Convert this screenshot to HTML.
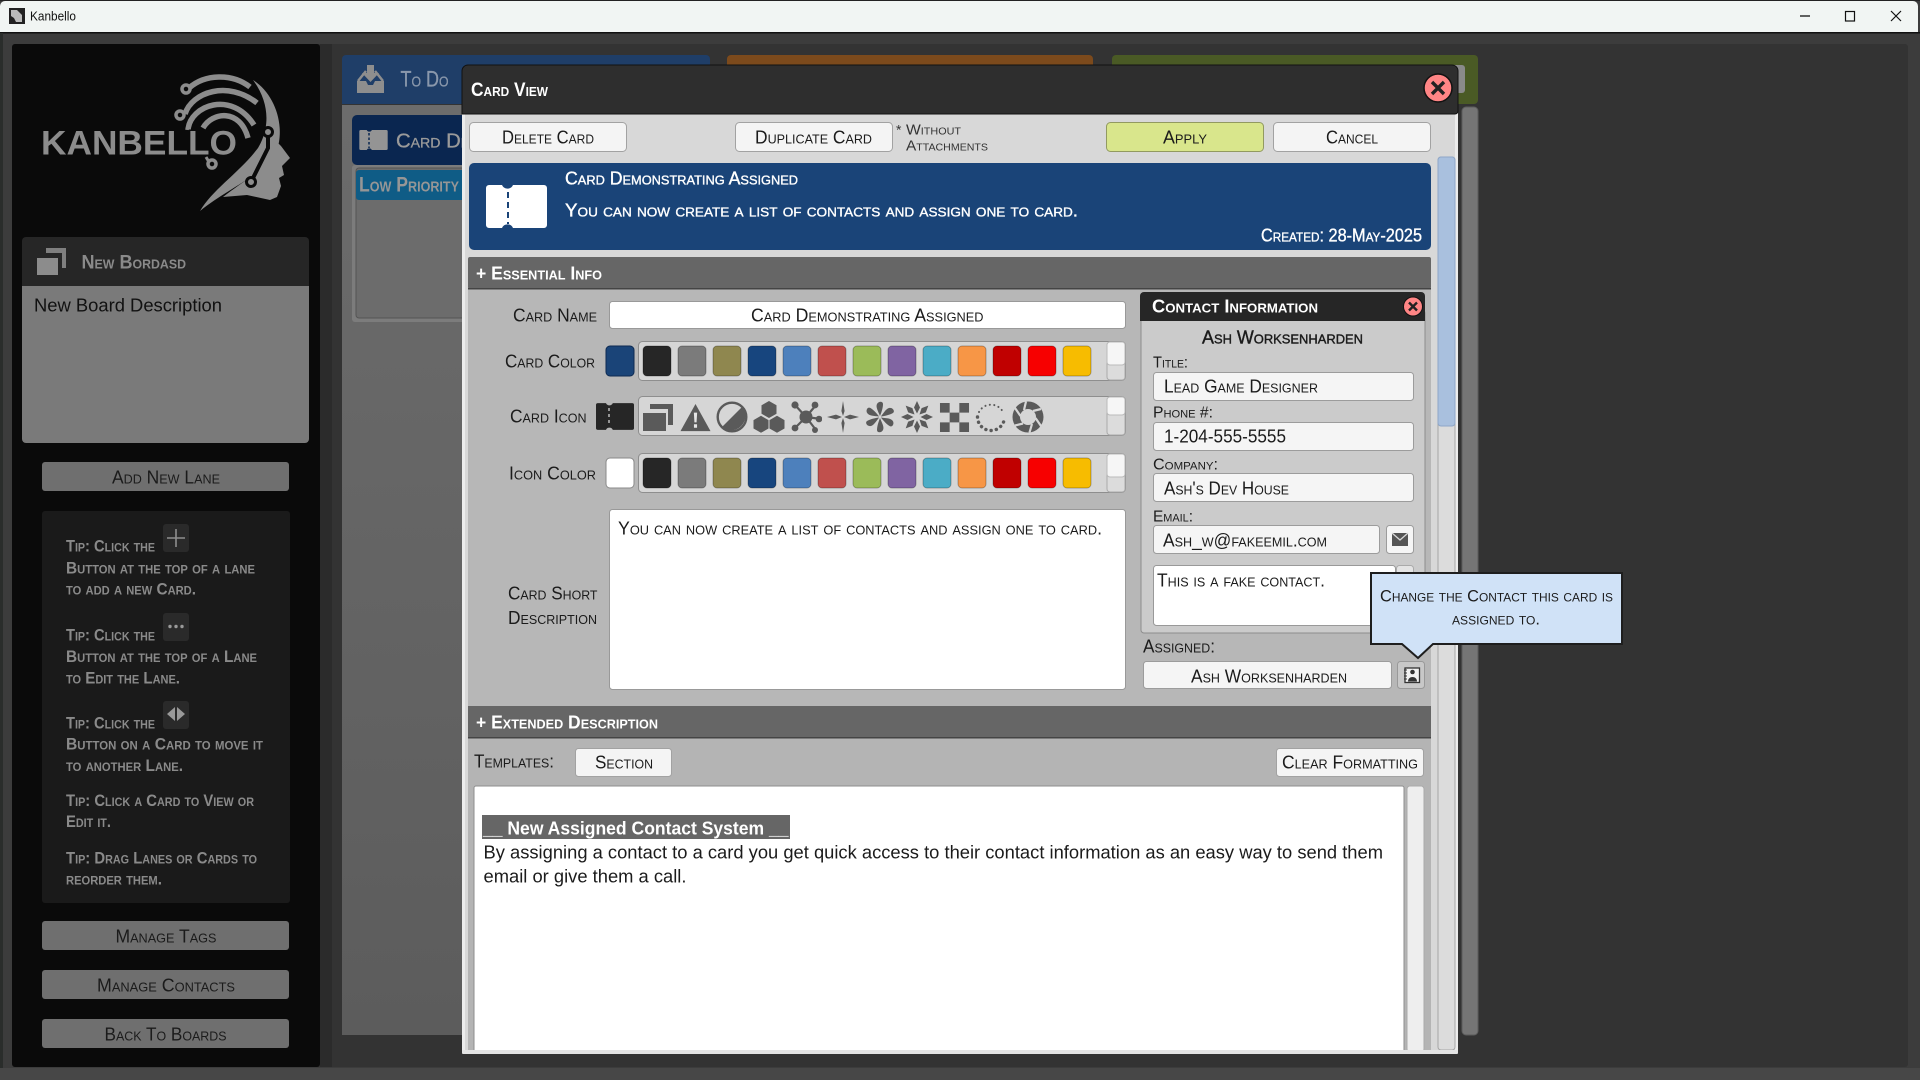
<!DOCTYPE html>
<html lang="en"><head><meta charset="utf-8"><title>Kanbello</title>
<style>
html,body{margin:0;padding:0;background:#3c3c3c;overflow:hidden;width:1920px;height:1080px}
svg{display:block;position:absolute;left:0;top:0}
text{font-family:"Liberation Sans",sans-serif;font-variant:small-caps;font-size:18px;fill:#1b1b1b;transform:translateY(-.6px)}
.w{fill:#fff;font-weight:700}
.g{fill:#8a8a8a;font-weight:700}
.n{font-variant:normal}
.btn{fill:#f4f4f4;stroke:#a2a2a2;stroke-width:1}
.fld{fill:#f5f5f5;stroke:#9c9c9c;stroke-width:1}
.wh{fill:#fff;stroke:#999;stroke-width:1}
.sb{fill:#6f6f6f}
.strip{fill:#d6d6d6;stroke:#8e8e8e;stroke-width:1}
.sw{stroke:#000;stroke-opacity:.28;stroke-width:1}
.tip{font-size:16.5px}
.ic{fill:#5a5a5a}
</style></head><body>
<svg width="1920" height="1080" viewBox="0 0 1920 1080">
<defs>
<linearGradient id="lane" x1="0" y1="0" x2="0" y2="1"><stop offset="0" stop-color="#6c6c6c"/><stop offset="1" stop-color="#5c5c5c"/></linearGradient>
<symbol id="ticket" viewBox="0 0 61 43"><path d="M3 0H16a6 6 0 0 0 11 0H58a3 3 0 0 1 3 3V40a3 3 0 0 1-3 3H27a6 6 0 0 0-11 0H3a3 3 0 0 1-3-3V3a3 3 0 0 1 3-3Z"/></symbol>
<symbol id="warn" viewBox="0 0 32 32"><path d="M16 2 31.500 30H.5Z"/><path d="M14.300 11h3.400l-.6 10h-2.200ZM14.400 23h3.200v3.600h-3.200Z" fill="#e6e6e6"/></symbol>
<symbol id="half" viewBox="0 0 32 32"><circle cx="16" cy="16" r="14.300" fill="none" stroke="#5a5a5a" stroke-width="2.400"/><path d="M26.500 5.500A15 15 0 0 1 5.500 26.500Z"/></symbol>
<symbol id="hex" viewBox="0 0 32 32"><path d="M16 0l7.500 4.300v8.400L16 17l-7.500-4.300V4.300ZM8 14.800l7.500 4.300v8.400L8 31.800.5 27.500v-8.400ZM24 14.800l7.500 4.300v8.400L24 31.800l-7.500-4.300v-8.400Z"/></symbol>
<symbol id="node" viewBox="0 0 32 32"><path d="M5 4 16 16M26 4 16 16M31 18 16 16M5 27 16 16M26 29 16 16" stroke="#5a5a5a" stroke-width="2.200"/><circle cx="16" cy="16" r="6.500"/><circle cx="5" cy="4" r="3.600"/><circle cx="25" cy="4" r="3.400"/><circle cx="29" cy="18" r="3.300"/><circle cx="5" cy="27" r="3.400"/><circle cx="25" cy="29" r="3"/></symbol>
<symbol id="spark" viewBox="0 0 32 32"><path d="M16 0l1.600 10L16 15l-1.600-5ZM16 32l-1.600-10 1.600-5 1.600 5ZM0 16l9-2.400 6 2.400-6 2.400ZM32 16l-9 2.400-6-2.400 6-2.400Z"/></symbol>
<symbol id="flower" viewBox="0 0 32 32"><path d="M16 15C14 10 11.500 6 13 3s6-3 6 0-1 7-3 12Z"/><path d="M16 15C14 10 11.500 6 13 3s6-3 6 0-1 7-3 12Z" transform="rotate(60 16 16)"/><path d="M16 15C14 10 11.500 6 13 3s6-3 6 0-1 7-3 12Z" transform="rotate(120 16 16)"/><path d="M16 15C14 10 11.500 6 13 3s6-3 6 0-1 7-3 12Z" transform="rotate(180 16 16)"/><path d="M16 15C14 10 11.500 6 13 3s6-3 6 0-1 7-3 12Z" transform="rotate(240 16 16)"/><path d="M16 15C14 10 11.500 6 13 3s6-3 6 0-1 7-3 12Z" transform="rotate(300 16 16)"/></symbol>
<symbol id="burst" viewBox="0 0 32 32"><g fill="#5a5a5a"><path d="M16 12.500l-3-6L16 0l3 6.500Z"/><path d="M16 12.500l-3-6L16 0l3 6.500Z" transform="rotate(45 16 16)"/><path d="M16 12.500l-3-6L16 0l3 6.500Z" transform="rotate(90 16 16)"/><path d="M16 12.500l-3-6L16 0l3 6.500Z" transform="rotate(135 16 16)"/><path d="M16 12.500l-3-6L16 0l3 6.500Z" transform="rotate(180 16 16)"/><path d="M16 12.500l-3-6L16 0l3 6.500Z" transform="rotate(225 16 16)"/><path d="M16 12.500l-3-6L16 0l3 6.500Z" transform="rotate(270 16 16)"/><path d="M16 12.500l-3-6L16 0l3 6.500Z" transform="rotate(315 16 16)"/></g></symbol>
<symbol id="check" viewBox="0 0 32 32"><path d="M1 1h10v10H1ZM21 1h10v10H21ZM11 11h10v10H11ZM1 21h10v10H1ZM21 21h10v10H21Z"/></symbol>
<symbol id="dots" viewBox="0 0 32 32"><path d="M4 11A13.500 13.500 0 0 1 28 11" fill="none" stroke="#5a5a5a" stroke-width="2" stroke-linecap="round" stroke-dasharray=".1 4.400"/><path d="M2.500 16a13.500 13.500 0 0 0 27 0" fill="none" stroke="#5a5a5a" stroke-width="3.400" stroke-linecap="round" stroke-dasharray=".1 5.200"/></symbol>
<symbol id="apert" viewBox="0 0 32 32"><circle cx="16" cy="16" r="15.500"/><circle cx="16" cy="16" r="8" fill="#d6d6d6"/><path d="M12 9 14 .5M21 10 29 8M23.500 17 29 25M20 23 17.500 31.500M11 22.500 3 24.500M8.500 15 3 7" stroke="#d6d6d6" stroke-width="2.200" fill="none"/></symbol>
</defs>

<!-- window -->
<rect width="1920" height="1080" fill="#3c3c3c"/>
<rect x="0" y="0" width="1920" height="1" fill="#222"/>
<path d="M0 6a5 5 0 0 1 5-5H1913a5 5 0 0 1 5 5V33H0Z" fill="#f1f5f3"/>
<rect x="0" y="32" width="1920" height="1.500" fill="#111"/>
<rect x="0" y="33" width="3" height="1047" fill="#2a2d2b"/>
<rect x="0" y="1068" width="1920" height="12" fill="#474747"/>
<rect x="9" y="8" width="16" height="16" fill="#222"/>
<path d="M11 10h6l5 5v7h-6l-2-4-3-2Z" fill="#bbb"/>
<text class="n" x="30" y="21" style="font-size:13px;fill:#111" textLength="46" lengthAdjust="spacingAndGlyphs">Kanbello</text>
<path d="M1800 16h10" stroke="#111" stroke-width="1.300"/>
<rect x="1845.500" y="11.500" width="9" height="9.500" fill="none" stroke="#111" stroke-width="1.200"/>
<path d="M1891 11l10 10M1901 11l-10 10" stroke="#111" stroke-width="1.200"/>

<!-- main panel -->
<rect x="12" y="44" width="1896" height="1023" rx="3" fill="#333"/>
<rect x="320" y="44" width="12" height="1023" fill="#2b2b2b"/>

<!-- lanes -->
<rect x="342" y="105" width="368" height="930" fill="url(#lane)"/>
<path d="M342 59a4 4 0 0 1 4-4H706a4 4 0 0 1 4 4V104H342Z" fill="#1f3e68"/>
<path d="M357 93V81H366L368 85H373L375 81H384V93Z" fill="#8e8e8e"/>
<path d="M358 81 366 71M383 81 375 71" stroke="#8e8e8e" stroke-width="2.500"/>
<path d="M367 65h7v8h5l-8.500 9-8.500-9h5Z" fill="#8e8e8e"/>
<text x="400.500" y="87" style="font-size:22px;fill:#8a98ac;stroke:#8a98ac;stroke-width:.3px" textLength="48" lengthAdjust="spacingAndGlyphs">To Do</text>
<rect x="352" y="165" width="358" height="157" rx="3" fill="#7c7c7c"/>
<rect x="356" y="168" width="354" height="150" rx="3" fill="#6c6c6c" stroke="#555"/>
<rect x="352" y="115" width="358" height="50" rx="5" fill="#0a2650"/>
<use href="#ticket" x="359" y="130" width="29" height="20" fill="#949494"/>
<path d="M369 133V148" stroke="#0a2650" stroke-width="1.500" stroke-dasharray="2.500 2"/>
<text x="396" y="148" style="font-size:20px;fill:#9a9a9a;stroke:#9a9a9a;stroke-width:.3px" textLength="97" lengthAdjust="spacingAndGlyphs">Card Demo</text>
<rect x="356" y="170" width="354" height="30" rx="3" fill="#0f5c86"/>
<text x="359" y="192" style="font-size:21px;fill:#969696;font-weight:700" textLength="100" lengthAdjust="spacingAndGlyphs">Low Priority</text>
<rect x="727" y="55" width="366" height="30" rx="4" fill="#7c4a1c"/>
<rect x="1112" y="55" width="366" height="49" rx="4" fill="#4a5a25"/>
<rect x="1450" y="65" width="15" height="28" rx="3" fill="#8a8a8a"/>
<rect x="1462" y="107" width="16" height="928" rx="4" fill="#757575" stroke="#5c5c5c"/>

<!-- sidebar -->
<rect x="12" y="44" width="308" height="1023" rx="3" fill="#0a0a0a"/>
<!-- logo -->
<g fill="none" stroke="#8c8c8c" stroke-width="5.500">
<path d="M189 88C205 74 232 73 250 87"/>
<path d="M185 114C192 92 228 80 257 103"/>
<path d="M188 130C190 105 232 90 254 125"/>
<path d="M203 128C212 112 240 108 248 138"/>
<circle cx="186" cy="89" r="4" stroke-width="3.500" fill="#0a0a0a"/>
<circle cx="180" cy="115" r="4" stroke-width="3.500" fill="#0a0a0a"/>
<path d="M206 157 212 167" stroke-width="3"/>
<circle cx="212" cy="164" r="4" stroke-width="3.500" fill="#0a0a0a"/>
</g>
<path d="M253 80C272 92 283 118 279 142C273 172 232 185 200 211C212 190 240 172 258 148C270 128 270 103 253 80Z" fill="#8c8c8c"/>
<path d="M223 197C240 183 262 172 272 156L278 143L281 146L290 158L282 166L284 175L279 178L281 186L277 197L270 200L247 195Z" fill="#8c8c8c"/>
<path d="M268 132 268 148 251 182" fill="none" stroke="#0a0a0a" stroke-width="4"/>
<circle cx="268" cy="132" r="4.500" fill="#8c8c8c" stroke="#0a0a0a" stroke-width="3"/>
<circle cx="251" cy="182" r="4.500" fill="#8c8c8c" stroke="#0a0a0a" stroke-width="3"/>
<text x="41" y="155" style="font-size:34px;font-variant:normal;font-weight:700;fill:#8c8c8c;paint-order:stroke;stroke:#0a0a0a;stroke-width:3px" textLength="196" lengthAdjust="spacingAndGlyphs">KANBELLO</text>

<path d="M22 241a4 4 0 0 1 4-4H305a4 4 0 0 1 4 4V286H22Z" fill="#262626"/>
<path d="M22 286H309V439a4 4 0 0 1-4 4H26a4 4 0 0 1-4-4Z" fill="#7a7a7a"/>
<path d="M46 248H66V268H62V253H46Z" fill="#7f7f7f"/>
<rect x="37" y="258" width="21" height="17" fill="#8c8c8c"/>
<text class="g" x="81.500" y="269" textLength="104.500" lengthAdjust="spacingAndGlyphs" style="font-size:19px">New Bordasd</text>
<text class="n" x="34" y="312" textLength="188" lengthAdjust="spacingAndGlyphs" style="font-size:18px;fill:#111">New Board Description</text>

<rect x="42" y="462" width="247" height="29" rx="3" class="sb"/>
<text x="112" y="484" textLength="108" lengthAdjust="spacingAndGlyphs">Add New Lane</text>

<rect x="42" y="511" width="248" height="392" rx="3" fill="#1a1a1a"/>
<rect x="163" y="524" width="26" height="28" rx="3" fill="#2a2a2a"/>
<path d="M176 529v18M167 538h18" stroke="#8e8e8e" stroke-width="1.600"/>
<rect x="163" y="613" width="26" height="28" rx="3" fill="#2a2a2a"/>
<circle cx="170" cy="626.500" r="1.700" fill="#999"/><circle cx="176" cy="626.500" r="1.700" fill="#999"/><circle cx="182" cy="626.500" r="1.700" fill="#999"/>
<rect x="163" y="701" width="26" height="28" rx="3" fill="#2a2a2a"/>
<path d="M175 707v14l-8-7ZM177 707v14l8-7Z" fill="#999"/>
<text class="g tip" x="66" y="552" textLength="89" lengthAdjust="spacingAndGlyphs">Tip: Click the</text>
<text class="g tip" x="66" y="574" textLength="189" lengthAdjust="spacingAndGlyphs">Button at the top of a lane</text>
<text class="g tip" x="66" y="595" textLength="130" lengthAdjust="spacingAndGlyphs">to add a new Card.</text>
<text class="g tip" x="66" y="641" textLength="89" lengthAdjust="spacingAndGlyphs">Tip: Click the</text>
<text class="g tip" x="66" y="662.500" textLength="191" lengthAdjust="spacingAndGlyphs">Button at the top of a Lane</text>
<text class="g tip" x="66" y="684" textLength="114" lengthAdjust="spacingAndGlyphs">to Edit the Lane.</text>
<text class="g tip" x="66" y="729" textLength="89" lengthAdjust="spacingAndGlyphs">Tip: Click the</text>
<text class="g tip" x="66" y="750" textLength="197" lengthAdjust="spacingAndGlyphs">Button on a Card to move it</text>
<text class="g tip" x="66" y="771.500" textLength="117" lengthAdjust="spacingAndGlyphs">to another Lane.</text>
<text class="g tip" x="66" y="806.500" textLength="188" lengthAdjust="spacingAndGlyphs">Tip: Click a Card to View or</text>
<text class="g tip" x="66" y="827.500" textLength="45" lengthAdjust="spacingAndGlyphs">Edit it.</text>
<text class="g tip" x="66" y="864" textLength="191" lengthAdjust="spacingAndGlyphs">Tip: Drag Lanes or Cards to</text>
<text class="g tip" x="66" y="885" textLength="96" lengthAdjust="spacingAndGlyphs">reorder them.</text>

<rect x="42" y="921" width="247" height="29" rx="3" class="sb"/>
<text x="115.500" y="943" textLength="101" lengthAdjust="spacingAndGlyphs">Manage Tags</text>
<rect x="42" y="970" width="247" height="29" rx="3" class="sb"/>
<text x="97" y="992" textLength="138" lengthAdjust="spacingAndGlyphs">Manage Contacts</text>
<rect x="42" y="1019" width="247" height="29" rx="3" class="sb"/>
<text x="104.500" y="1041" textLength="122" lengthAdjust="spacingAndGlyphs">Back To Boards</text>

<!-- modal -->
<rect x="462" y="100" width="996" height="954" rx="3" fill="#ececec"/>
<rect x="465" y="114" width="990" height="937" fill="#d8d8d8"/>
<path d="M462 71a6 6 0 0 1 6-6H1452a6 6 0 0 1 6 6V111a3 3 0 0 1-3 3H462Z" fill="#2e2e2e" stroke="#111" stroke-width="1"/>
<text class="w" x="471" y="96.500" textLength="77" lengthAdjust="spacingAndGlyphs" style="font-size:19px">Card View</text>
<circle cx="1438" cy="88" r="14" fill="#ff8585" stroke="#111" stroke-width="1.500"/>
<path d="M1432 82l12 12M1444 82l-12 12" stroke="#222" stroke-width="3.400"/>

<rect x="469.500" y="122.500" width="157" height="29" rx="4" class="btn"/>
<text x="502" y="144" textLength="92" lengthAdjust="spacingAndGlyphs">Delete Card</text>
<rect x="735.500" y="122.500" width="157" height="29" rx="4" class="btn"/>
<text x="755" y="144" textLength="117" lengthAdjust="spacingAndGlyphs">Duplicate Card</text>
<text x="896" y="135" style="font-size:14px;fill:#333">*</text>
<text x="906" y="135" textLength="55" lengthAdjust="spacingAndGlyphs" style="font-size:14.500px;fill:#333">Without</text>
<text x="906" y="151" textLength="82" lengthAdjust="spacingAndGlyphs" style="font-size:14.500px;fill:#333">Attachments</text>
<rect x="1106.500" y="122.500" width="157" height="29" rx="4" fill="#d9e68c" stroke="#929a60"/>
<text x="1163" y="144" textLength="44" lengthAdjust="spacingAndGlyphs">Apply</text>
<rect x="1273.500" y="122.500" width="157" height="29" rx="4" class="btn"/>
<text x="1326" y="144" textLength="52" lengthAdjust="spacingAndGlyphs">Cancel</text>

<rect x="469" y="163" width="962" height="87" rx="5" fill="#1a4478"/>
<use href="#ticket" x="486" y="185" width="61" height="43" fill="#fff"/>
<path d="M508 192V224" stroke="#1a4478" stroke-width="2" stroke-dasharray="6 4"/>
<text class="w" x="565" y="185" textLength="233" lengthAdjust="spacingAndGlyphs" style="font-weight:400;stroke:#fff;stroke-width:.35px">Card Demonstrating Assigned</text>
<text class="w" x="565" y="217" textLength="513" lengthAdjust="spacingAndGlyphs" style="font-weight:400;stroke:#fff;stroke-width:.35px">You can now create a list of contacts and assign one to card.</text>
<text class="w" x="1261" y="242" textLength="161" lengthAdjust="spacingAndGlyphs" style="font-weight:400;stroke:#fff;stroke-width:.35px">Created: 28-May-2025</text>

<!-- essential -->
<rect x="468" y="288" width="963" height="418" fill="#b7b7b7"/>
<rect x="468" y="257" width="963" height="32" rx="2" fill="#666"/>
<rect x="468" y="288" width="963" height="1.500" fill="#444"/>
<text class="w" x="476" y="280" textLength="126" lengthAdjust="spacingAndGlyphs">+ Essential Info</text>

<text x="513" y="322" textLength="84" lengthAdjust="spacingAndGlyphs">Card Name</text>
<rect x="609.500" y="301.500" width="516" height="27" rx="3" class="wh"/>
<text x="751" y="322" textLength="232.500" lengthAdjust="spacingAndGlyphs">Card Demonstrating Assigned</text>

<text x="505" y="368" textLength="90" lengthAdjust="spacingAndGlyphs">Card Color</text>
<rect x="606" y="346" width="28" height="30" rx="4" fill="#1a4478" stroke="#0d2a52"/>
<rect x="638.500" y="341.500" width="487" height="39" rx="4" class="strip"/>
<rect x="1107" y="342" width="18" height="38" rx="3" fill="#dcdcdc" stroke="#aaa"/>
<rect x="1107" y="342" width="18" height="23" rx="3" fill="#f6f6f6" stroke="#bbb"/>
<g class="sw">
<rect x="643" y="346" width="28" height="30" rx="4" fill="#262626"/><rect x="678" y="346" width="28" height="30" rx="4" fill="#7b7b7b"/><rect x="713" y="346" width="28" height="30" rx="4" fill="#8f874f"/><rect x="748" y="346" width="28" height="30" rx="4" fill="#17457e"/><rect x="783" y="346" width="28" height="30" rx="4" fill="#4d80bc"/><rect x="818" y="346" width="28" height="30" rx="4" fill="#c0504d"/><rect x="853" y="346" width="28" height="30" rx="4" fill="#9bbb59"/><rect x="888" y="346" width="28" height="30" rx="4" fill="#8064a2"/><rect x="923" y="346" width="28" height="30" rx="4" fill="#4bacc6"/><rect x="958" y="346" width="28" height="30" rx="4" fill="#f79646"/><rect x="993" y="346" width="28" height="30" rx="4" fill="#c00000"/><rect x="1028" y="346" width="28" height="30" rx="4" fill="#f70000"/><rect x="1063" y="346" width="28" height="30" rx="4" fill="#f7bc00"/>
</g>

<text x="510" y="423" textLength="76.500" lengthAdjust="spacingAndGlyphs">Card Icon</text>
<use href="#ticket" x="596" y="403" width="38" height="27" fill="#262626"/>
<path d="M609 408V426" stroke="#bbb" stroke-width="1.500" stroke-dasharray="3 3"/>
<rect x="638.500" y="396.500" width="487" height="39" rx="4" class="strip"/>
<rect x="1107" y="397" width="18" height="38" rx="3" fill="#dcdcdc" stroke="#aaa"/>
<rect x="1107" y="397" width="18" height="18" rx="3" fill="#f6f6f6" stroke="#bbb"/>
<path d="M650 404H673V425H668V409H650Z" fill="#5a5a5a"/>
<rect x="643" y="413" width="23" height="18" fill="#5a5a5a"/>
<g fill="#5a5a5a">
<use href="#warn" x="680" y="402" width="31" height="31"/>
<use href="#half" x="716" y="401" width="32" height="32"/>
<use href="#hex" x="753" y="401" width="32" height="32"/>
<use href="#node" x="790" y="401" width="32" height="32"/>
<use href="#spark" x="827" y="401" width="32" height="32"/>
<use href="#flower" x="864" y="401" width="32" height="32"/>
<use href="#burst" x="901" y="401" width="32" height="32"/>
<use href="#check" x="939" y="402" width="31" height="31"/>
<use href="#dots" x="975" y="401" width="32" height="32"/>
<use href="#apert" x="1012" y="401" width="32" height="32"/>
</g>

<text x="509" y="480" textLength="87" lengthAdjust="spacingAndGlyphs">Icon Color</text>
<rect x="606" y="458" width="28" height="30" rx="4" fill="#fff" stroke="#888"/>
<rect x="638.500" y="453.500" width="487" height="39" rx="4" class="strip"/>
<rect x="1107" y="454" width="18" height="38" rx="3" fill="#dcdcdc" stroke="#aaa"/>
<rect x="1107" y="454" width="18" height="23" rx="3" fill="#f6f6f6" stroke="#bbb"/>
<g class="sw">
<rect x="643" y="458" width="28" height="30" rx="4" fill="#262626"/><rect x="678" y="458" width="28" height="30" rx="4" fill="#7b7b7b"/><rect x="713" y="458" width="28" height="30" rx="4" fill="#8f874f"/><rect x="748" y="458" width="28" height="30" rx="4" fill="#17457e"/><rect x="783" y="458" width="28" height="30" rx="4" fill="#4d80bc"/><rect x="818" y="458" width="28" height="30" rx="4" fill="#c0504d"/><rect x="853" y="458" width="28" height="30" rx="4" fill="#9bbb59"/><rect x="888" y="458" width="28" height="30" rx="4" fill="#8064a2"/><rect x="923" y="458" width="28" height="30" rx="4" fill="#4bacc6"/><rect x="958" y="458" width="28" height="30" rx="4" fill="#f79646"/><rect x="993" y="458" width="28" height="30" rx="4" fill="#c00000"/><rect x="1028" y="458" width="28" height="30" rx="4" fill="#f70000"/><rect x="1063" y="458" width="28" height="30" rx="4" fill="#f7bc00"/>
</g>

<text x="508" y="600" textLength="89.500" lengthAdjust="spacingAndGlyphs">Card Short</text>
<text x="508" y="624.500" textLength="89" lengthAdjust="spacingAndGlyphs">Description</text>
<rect x="609.500" y="509.500" width="516" height="180" rx="3" class="wh"/>
<text x="618" y="535" textLength="484" lengthAdjust="spacingAndGlyphs">You can now create a list of contacts and assign one to card.</text>

<!-- contact -->
<rect x="1141" y="310" width="284" height="323" rx="3" fill="#cbcbcb" stroke="#8e8e8e"/>
<path d="M1140 296a4 4 0 0 1 4-4H1421a4 4 0 0 1 4 4V321H1140Z" fill="#262626"/>
<text class="w" x="1152" y="313" textLength="166" lengthAdjust="spacingAndGlyphs">Contact Information</text>
<circle cx="1413" cy="306.500" r="9.500" fill="#ff8585" stroke="#111"/>
<path d="M1409 302.500l8 8M1417 302.500l-8 8" stroke="#222" stroke-width="2.400"/>
<text x="1202" y="344" textLength="161" lengthAdjust="spacingAndGlyphs" style="stroke:#1b1b1b;stroke-width:.4px">Ash Worksenharden</text>
<text x="1153" y="368" textLength="35" lengthAdjust="spacingAndGlyphs" style="font-size:15.500px">Title:</text>
<rect x="1153.500" y="372.500" width="260" height="28" rx="3" class="fld"/>
<text x="1164" y="393" textLength="154" lengthAdjust="spacingAndGlyphs">Lead Game Designer</text>
<text x="1153" y="418" textLength="60" lengthAdjust="spacingAndGlyphs" style="font-size:15.500px">Phone #:</text>
<rect x="1153.500" y="422.500" width="260" height="28" rx="3" class="fld"/>
<text x="1164" y="443" textLength="122" lengthAdjust="spacingAndGlyphs">1-204-555-5555</text>
<text x="1153" y="470" textLength="65" lengthAdjust="spacingAndGlyphs" style="font-size:15.500px">Company:</text>
<rect x="1153.500" y="473.500" width="260" height="28" rx="3" class="fld"/>
<text x="1164" y="495" textLength="125" lengthAdjust="spacingAndGlyphs">Ash's Dev House</text>
<text x="1153" y="522" textLength="40" lengthAdjust="spacingAndGlyphs" style="font-size:15.500px">Email:</text>
<rect x="1153.500" y="525.500" width="226" height="28" rx="3" class="fld"/>
<text x="1163" y="547" textLength="164" lengthAdjust="spacingAndGlyphs">Ash_w@fakeemil.com</text>
<rect x="1386.500" y="525.500" width="27" height="28" rx="3" class="fld"/>
<rect x="1392" y="533" width="16" height="13" fill="#555"/>
<path d="M1392 533l8 7 8-7" fill="none" stroke="#d8d8d8" stroke-width="1.300"/>
<rect x="1153.500" y="565.500" width="242" height="60" rx="3" class="wh"/>
<rect x="1396.500" y="565.500" width="17" height="60" rx="3" fill="#e4e4e4" stroke="#aaa"/>
<text x="1157" y="587" textLength="168" lengthAdjust="spacingAndGlyphs">This is a fake contact.</text>

<text x="1143" y="653" textLength="72" lengthAdjust="spacingAndGlyphs">Assigned:</text>
<rect x="1143.500" y="661.500" width="248" height="27" rx="3" class="fld"/>
<text x="1191" y="683" textLength="156" lengthAdjust="spacingAndGlyphs">Ash Worksenharden</text>
<rect x="1397.500" y="661.500" width="27" height="27" rx="3" fill="#c8c8c8" stroke="#999"/>
<rect x="1405" y="668" width="14.500" height="14.500" fill="#f2f2f2" stroke="#333" stroke-width="1.300"/>
<path d="M1404 670h3M1404 673h3M1404 676h3M1404 679h3" stroke="#333" stroke-width="1"/>
<circle cx="1412.500" cy="672" r="2.300" fill="#333"/>
<path d="M1408 681.500c0-6 9-6 9 0Z" fill="#333"/>

<!-- extended -->
<rect x="468" y="738" width="963" height="313" fill="#b4b4b4"/>
<rect x="468" y="706" width="963" height="32" fill="#666"/>
<rect x="468" y="737" width="963" height="1.500" fill="#444"/>
<text class="w" x="476" y="729" textLength="182" lengthAdjust="spacingAndGlyphs">+ Extended Description</text>
<text x="474" y="768" textLength="80" lengthAdjust="spacingAndGlyphs">Templates:</text>
<rect x="575.500" y="748.500" width="96" height="28" rx="3" class="btn"/>
<text x="595" y="769" textLength="58" lengthAdjust="spacingAndGlyphs">Section</text>
<rect x="1276.500" y="748.500" width="147" height="28" rx="3" class="btn"/>
<text x="1282" y="769" textLength="136" lengthAdjust="spacingAndGlyphs">Clear Formatting</text>
<rect x="474" y="786" width="930" height="266" rx="2" fill="#fff" stroke="#8e8e8e"/>
<rect x="1407" y="786" width="17" height="266" rx="3" fill="#eee" stroke="#aaa"/>
<rect x="482" y="815" width="308" height="24" fill="#666"/>
<text class="w n" x="483" y="835" textLength="305.500" lengthAdjust="spacingAndGlyphs" style="font-size:18px">__ New Assigned Contact System __</text>
<text class="n" x="483.500" y="859" textLength="899.500" lengthAdjust="spacingAndGlyphs">By assigning a contact to a card you get quick access to their contact information as an easy way to send them</text>
<text class="n" x="483.500" y="883" textLength="203" lengthAdjust="spacingAndGlyphs">email or give them a call.</text>

<!-- modal scrollbar -->
<rect x="1438" y="157" width="17" height="893" rx="3" fill="#dcdcdc" stroke="#a6a6a6"/>
<rect x="1438" y="157" width="17" height="269" rx="3" fill="#a9c0de" stroke="#8ea6c8"/>
<rect x="462" y="1050" width="996" height="4" rx="1" fill="#e4e4e4"/>

<!-- tooltip -->
<path d="M1371 573H1622V644H1433L1418 658 1402 644H1371Z" fill="#d0e2f7" stroke="#1e1e1e" stroke-width="2"/>
<text x="1380" y="602" textLength="233" lengthAdjust="spacingAndGlyphs" style="font-size:16.500px">Change the Contact this card is</text>
<text x="1452" y="625" textLength="88" lengthAdjust="spacingAndGlyphs" style="font-size:16.500px">assigned to.</text>
</svg>
</body></html>
